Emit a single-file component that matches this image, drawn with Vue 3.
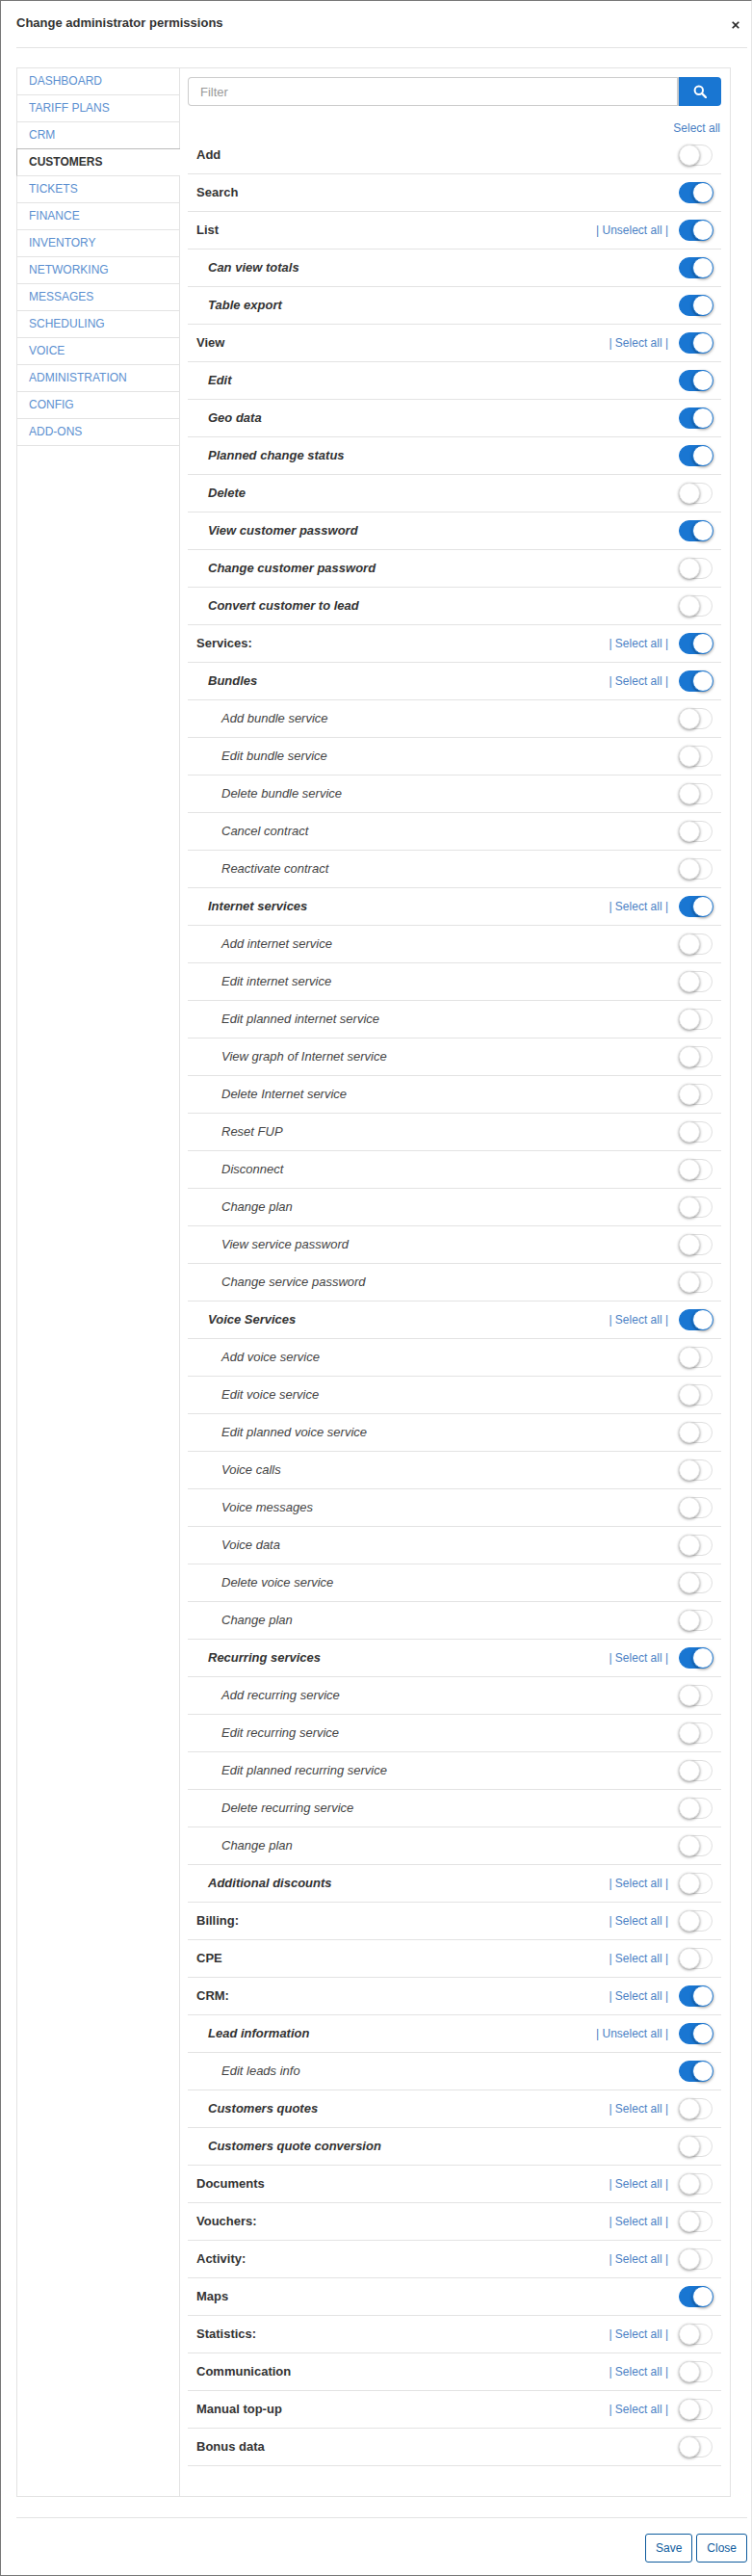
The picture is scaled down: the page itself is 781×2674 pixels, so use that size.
<template>
  <div class="modal">
    <div class="modal-header">
      <h4 class="modal-title">Change administrator permissions</h4>
      <button type="button" class="close-x">
        <svg width="8" height="8" viewBox="0 0 8 8"><path d="M.7.7l6.6 6.6M7.3.7L.7 7.3" stroke="#2a2a2a" stroke-width="1.6" fill="none" /></svg>
      </button>
    </div>
    <div class="modal-body">
      <div class="panel">
        <ul class="side-nav">
          <li v-for="item in navItems" :key="item" :class="{ active: item === 'CUSTOMERS' }">{{ item }}</li>
        </ul>
        <div class="content">
          <div class="filter">
            <input class="filter-input" type="text" placeholder="Filter" />
            <button type="button" class="filter-btn">
              <svg width="14" height="14" viewBox="0 0 14 14"><circle cx="5.8" cy="5.8" r="4.2" fill="none" stroke="#fff" stroke-width="2" /><path d="M9 9l4 4" stroke="#fff" stroke-width="2.4" stroke-linecap="round" /></svg>
            </button>
          </div>
          <div class="select-all-top"><a>Select all</a></div>
          <div v-for="row in rows" :key="row.id" class="perm-row">
            <span class="perm-label" :class="'level-' + row.level">{{ row.label }}</span>
            <a v-if="row.link" class="perm-link">| {{ row.link }} |</a>
            <span class="switch" :class="{ on: row.on }"><i class="knob"></i></span>
          </div>
        </div>
      </div>
    </div>
    <div class="modal-footer">
      <button type="button" class="btn">Save</button>
      <button type="button" class="btn">Close</button>
    </div>
  </div>
</template>

<script setup>
const navItems = [
  'DASHBOARD', 'TARIFF PLANS', 'CRM', 'CUSTOMERS', 'TICKETS', 'FINANCE', 'INVENTORY', 'NETWORKING',
  'MESSAGES', 'SCHEDULING', 'VOICE', 'ADMINISTRATION', 'CONFIG', 'ADD-ONS',
]

const S = 'Select all'
const U = 'Unselect all'

// label, level, on, link
const raw = [
  ['Add', 0, false],
  ['Search', 0, true],
  ['List', 0, true, U],
  ['Can view totals', 1, true],
  ['Table export', 1, true],
  ['View', 0, true, S],
  ['Edit', 1, true],
  ['Geo data', 1, true],
  ['Planned change status', 1, true],
  ['Delete', 1, false],
  ['View customer password', 1, true],
  ['Change customer password', 1, false],
  ['Convert customer to lead', 1, false],
  ['Services:', 0, true, S],
  ['Bundles', 1, true, S],
  ['Add bundle service', 2, false],
  ['Edit bundle service', 2, false],
  ['Delete bundle service', 2, false],
  ['Cancel contract', 2, false],
  ['Reactivate contract', 2, false],
  ['Internet services', 1, true, S],
  ['Add internet service', 2, false],
  ['Edit internet service', 2, false],
  ['Edit planned internet service', 2, false],
  ['View graph of Internet service', 2, false],
  ['Delete Internet service', 2, false],
  ['Reset FUP', 2, false],
  ['Disconnect', 2, false],
  ['Change plan', 2, false],
  ['View service password', 2, false],
  ['Change service password', 2, false],
  ['Voice Services', 1, true, S],
  ['Add voice service', 2, false],
  ['Edit voice service', 2, false],
  ['Edit planned voice service', 2, false],
  ['Voice calls', 2, false],
  ['Voice messages', 2, false],
  ['Voice data', 2, false],
  ['Delete voice service', 2, false],
  ['Change plan', 2, false],
  ['Recurring services', 1, true, S],
  ['Add recurring service', 2, false],
  ['Edit recurring service', 2, false],
  ['Edit planned recurring service', 2, false],
  ['Delete recurring service', 2, false],
  ['Change plan', 2, false],
  ['Additional discounts', 1, false, S],
  ['Billing:', 0, false, S],
  ['CPE', 0, false, S],
  ['CRM:', 0, true, S],
  ['Lead information', 1, true, U],
  ['Edit leads info', 2, true],
  ['Customers quotes', 1, false, S],
  ['Customers quote conversion', 1, false],
  ['Documents', 0, false, S],
  ['Vouchers:', 0, false, S],
  ['Activity:', 0, false, S],
  ['Maps', 0, true],
  ['Statistics:', 0, false, S],
  ['Communication', 0, false, S],
  ['Manual top-up', 0, false, S],
  ['Bonus data', 0, false],
]

const rows = raw.map(([label, level, on, link], id) => ({ id, label, level, on, link }))
</script>

<style>
body {
  margin: 0;
  background: #fff;
}
</style>

<style scoped>
.modal {
  box-sizing: border-box;
  width: 781px;
  height: 2674px;
  display: flex;
  flex-direction: column;
  background: #fff;
  border-top: 1px solid #777;
  border-left: 1px solid #777;
  border-bottom: 1px solid #777;
  border-right: 1px solid #e5e5e5;
  font-family: "Liberation Sans", Arial, sans-serif;
  font-size: 13px;
  color: #333;
}

.modal-header {
  height: 48px;
  margin: 0 4px 0 16px;
  border-bottom: 1px solid #e3e3e3;
  display: flex;
  justify-content: space-between;
  box-sizing: content-box;
}

.modal-title {
  margin: 15px 0 0;
  font-size: 13px;
  line-height: 16px;
  font-weight: bold;
}

.close-x {
  border: 0;
  background: none;
  padding: 0;
  margin: 21px 8px 0 0;
  width: 8px;
  height: 8px;
  display: block;
  line-height: 0;
}

.modal-body {
  flex: 1;
  padding: 20px 21px 21px 16px;
  min-height: 0;
}

.panel {
  box-sizing: border-box;
  height: 100%;
  display: flex;
  border: 1px solid #e3e3e3;
}

.side-nav {
  list-style: none;
  margin: 0;
  padding: 0;
  width: 169px;
  align-self: flex-start;
  flex: none;
  position: relative;
  z-index: 1;
}

.side-nav li {
  box-sizing: border-box;
  height: 28px;
  line-height: 26px;
  padding-left: 12px;
  font-size: 12px;
  color: #5b8fd0;
  border-bottom: 1px solid #e3e3e3;
  border-right: 1px solid #e3e3e3;
}

.side-nav li.active {
  margin-left: -1px;
  padding-left: 12px;
  font-weight: bold;
  color: #333;
  border-top: 1px solid #bbb;
  border-left: 1px solid #bbb;
  border-right: 0;
  margin-top: -1px;
  height: 29px;
  width: 170px;
  background: #fff;
}

.content {
  flex: 1;
  min-width: 0;
  border-left: 1px solid #e3e3e3;
  margin-left: -1px;
  padding: 9px 9px 0 8px;
}

.filter {
  display: flex;
  height: 30px;
}

.filter-input {
  flex: 1;
  min-width: 0;
  box-sizing: border-box;
  height: 30px;
  border: 1px solid #ccc;
  border-right: 2px solid #ccc;
  border-radius: 4px 0 0 4px;
  padding: 0 12px;
  font: 13px "Liberation Sans", Arial, sans-serif;
  outline: none;
}

.filter-input::placeholder {
  color: #999;
}

.filter-btn {
  width: 44px;
  height: 30px;
  border: 0;
  padding: 0;
  background: #1976d2;
  border-radius: 0 4px 4px 0;
  display: flex;
  align-items: center;
  justify-content: center;
}

.select-all-top {
  height: 32px;
  box-sizing: border-box;
  padding: 15px 1px 0 0;
  line-height: 16px;
  text-align: right;
  color: #4a7fc4;
  font-size: 12px;
}

.perm-row {
  box-sizing: border-box;
  height: 39px;
  display: flex;
  align-items: center;
  border-bottom: 1px solid #e3e3e3;
  padding: 0 9px 0 9px;
}

.perm-label {
  flex: 1;
  min-width: 0;
  white-space: nowrap;
  margin-bottom: 1px;
}

.level-0 {
  font-weight: bold;
}

.level-1 {
  font-weight: bold;
  font-style: italic;
  padding-left: 12px;
}

.level-2 {
  font-style: italic;
  color: #444;
  padding-left: 26px;
}

.perm-link {
  color: #4a7fc4;
  font-size: 12px;
  margin: 0 11px 1px 0;
}

.switch {
  display: block;
  position: relative;
  box-sizing: border-box;
  width: 35px;
  height: 22px;
  border-radius: 11px;
  border: 1px solid #dfdfdf;
  background: #fff;
}

.switch.on {
  background: #1976d2;
  border-color: #1976d2;
}

.knob {
  position: absolute;
  top: -1px;
  left: -1px;
  box-sizing: border-box;
  width: 22px;
  height: 22px;
  border-radius: 50%;
  background: #fff;
  border: 1px solid #e3e3e3;
  box-shadow: 0 1px 3px rgba(0, 0, 0, 0.4);
}

.switch.on .knob {
  left: 13px;
  border-color: #1976d2;
}

.modal-footer {
  height: 60px;
  box-sizing: border-box;
  margin: 0 4px 0 16px;
  border-top: 1px solid #e3e3e3;
  padding-top: 16px;
  display: flex;
  justify-content: flex-end;
  gap: 4px;
}

.btn {
  box-sizing: border-box;
  height: 30px;
  padding: 0 10px;
  border: 1px solid #0f5c9e;
  border-radius: 3px;
  background: #fff;
  color: #0f5c9e;
  font: 12px "Liberation Sans", Arial, sans-serif;
}
</style>
